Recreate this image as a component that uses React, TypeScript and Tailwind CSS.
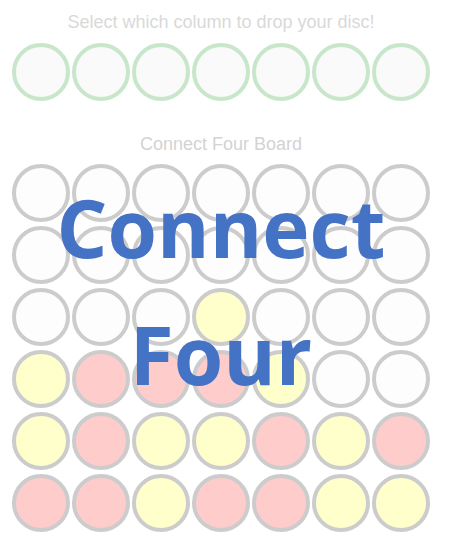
const board: string[][] = [
  ["e", "e", "e", "e", "e", "e", "e"],
  ["e", "e", "e", "e", "e", "e", "e"],
  ["e", "e", "e", "y", "e", "e", "e"],
  ["y", "r", "r", "r", "y", "e", "e"],
  ["y", "r", "y", "y", "r", "y", "r"],
  ["r", "r", "y", "r", "r", "y", "y"],
];

function Cell({ kind }: { kind: string }) {
  const fill =
    kind === "y" ? "bg-[#ffffcc]" : kind === "r" ? "bg-[#ffcccc]" : "bg-[#fdfdfd]";
  return (
    <div
      className={`w-[58px] h-[58px] rounded-full border-4 border-solid border-[#cccccc] ${fill}`}
    ></div>
  );
}

export default function App() {
  return (
    <div className="w-[442px] bg-white font-['Liberation_Sans',Arial,sans-serif]">
      <p className="pt-[12px] text-center text-[18px] leading-[21px] text-[#d9d9d9]">
        Select which column to drop your disc!
      </p>
      <div className="mt-[10px] flex justify-center gap-[2px]">
        {[0, 1, 2, 3, 4, 5, 6].map((i) => (
          <button
            key={i}
            className="w-[58px] h-[58px] rounded-full border-4 border-solid border-[#c8e6c9] bg-[#fafafa] cursor-pointer"
          ></button>
        ))}
      </div>
      <p className="mt-[33px] text-center text-[18px] leading-[21px] text-[#d3d3d3]">
        Connect Four Board
      </p>
      <div className="relative mt-[9px]">
        <div className="flex flex-col items-center gap-[4px]">
          {board.map((row, r) => (
            <div key={r} className="flex gap-[2px]">
              {row.map((c, i) => (
                <Cell key={i} kind={c} />
              ))}
            </div>
          ))}
        </div>
        <div className="absolute inset-0 -top-[1px] text-center font-['Open_Sans',sans-serif] font-bold text-[80px] leading-[127px] text-[#4472c4]">
          <div>Connect</div>
          <div>Four</div>
        </div>
      </div>
    </div>
  );
}
